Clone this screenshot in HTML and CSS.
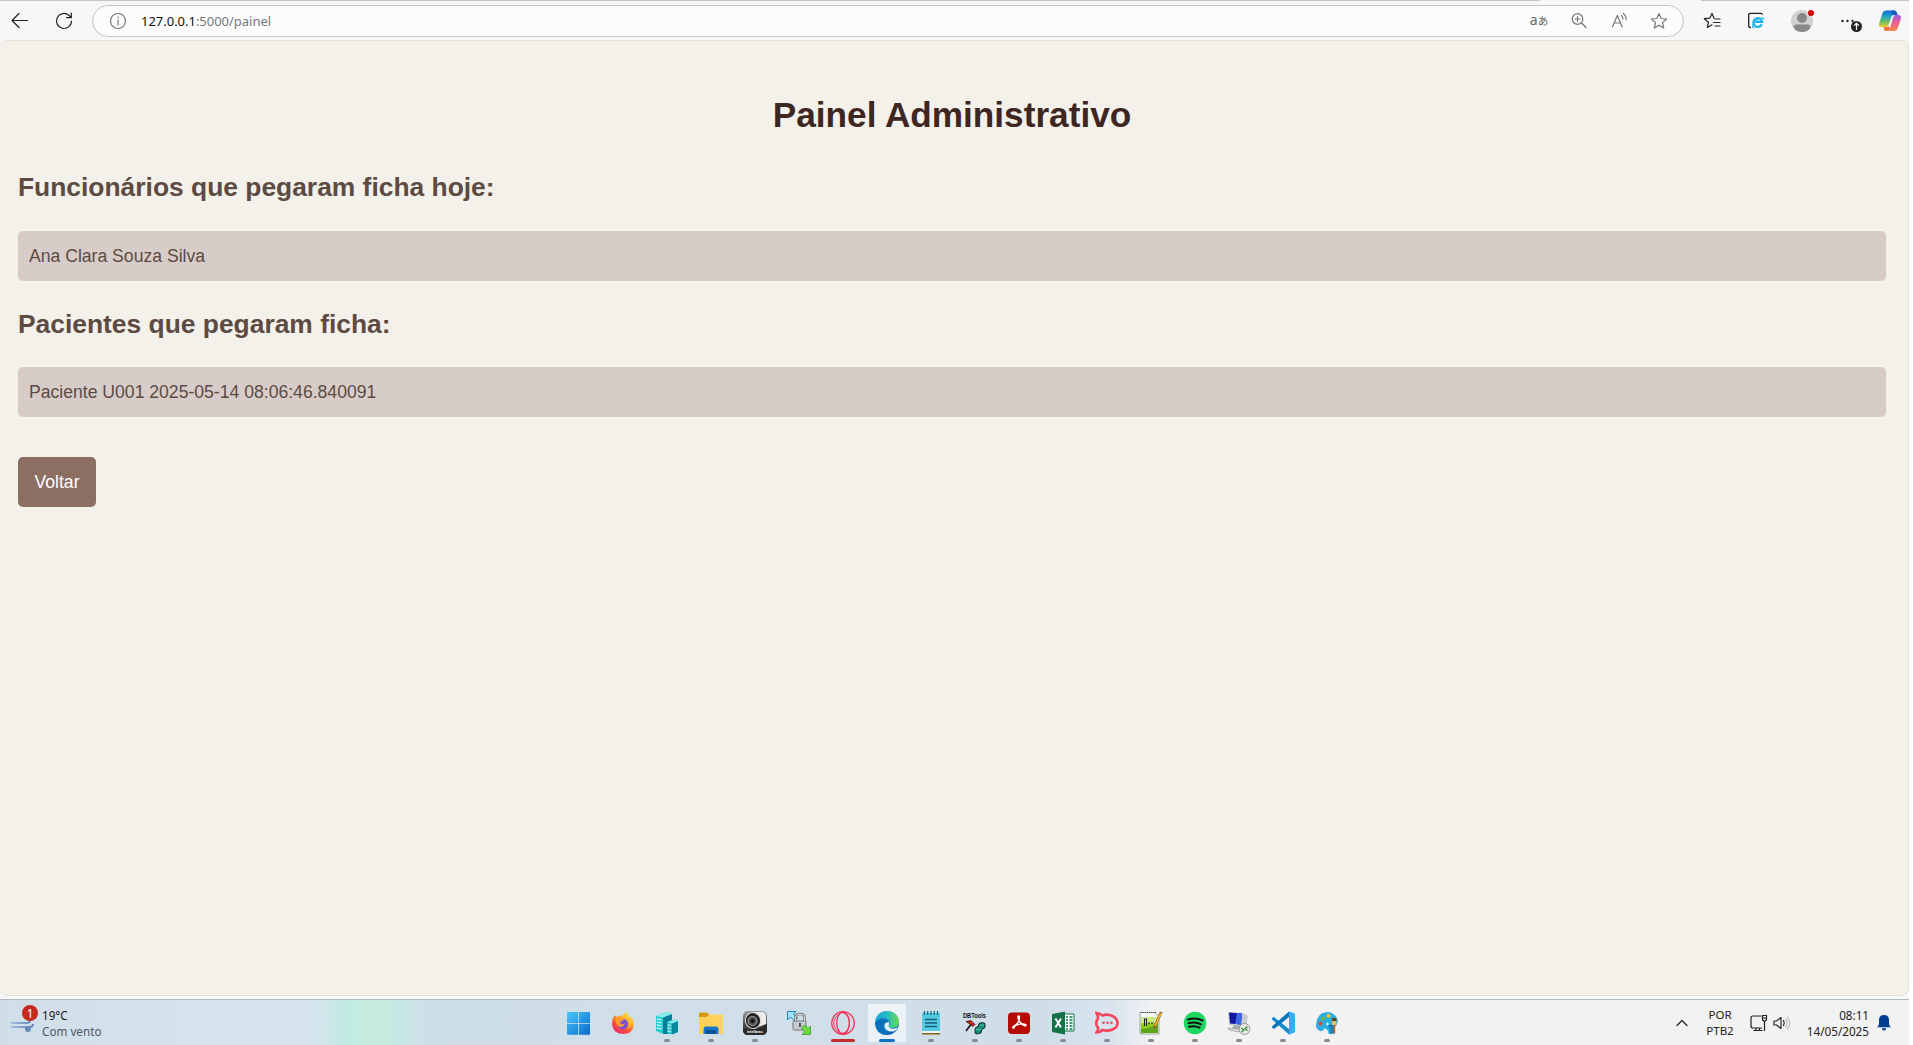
FILE: index.html
```
<!DOCTYPE html>
<html lang="pt-BR">
<head>
<meta charset="utf-8">
<title>Painel Administrativo</title>
<link rel="stylesheet" href="styles.css">
</head>
<body>
<div class="screen">
  <header class="toolbar">
    <div class="tabline"><span></span><span></span></div>
    <div class="nav">
      <svg width="18" height="18" viewBox="0 0 18 18" class="line dark"><path d="M16.500 8.500H1.500M8 1.500l-7 7 7 7"/></svg>
      <svg width="18" height="18" viewBox="0 0 18 18" class="line dark"><path d="M16.500 9a7.500 7.500 0 1 1-2.700-5.800l2.200 2.300M16.300 1v4.700h-4.600"/></svg>
    </div>
    <div class="address">
      <svg width="18" height="18" viewBox="0 0 18 18" class="line grey"><circle cx="9" cy="9" r="7.500"/><path d="M9 8v5M9 5v.800"/></svg>
      <div class="url"><b>127.0.0.1</b>:5000/painel</div>
      <div class="actions">
        <span class="translate"><i>a</i>あ</span>
        <svg width="18" height="18" viewBox="0 0 18 18" class="line grey"><circle cx="7.500" cy="7" r="5.300"/><path d="M11.500 11l4.500 4.500M5 7h5M7.500 4.500v5"/></svg>
        <svg width="18" height="18" viewBox="0 0 18 18" class="line grey"><path d="M2.500 15L7.300 3.500 12.200 15M4.200 11h6.200M11.500 3.500c1.100 1 1.500 2.200 1.300 3.700M13.200 1.500c2.200 1.500 3.200 3.700 2.800 6.300"/></svg>
        <svg width="18" height="18" viewBox="0 0 18 18" class="line grey"><path d="M9 1.500l2.200 5 5.400.5-4.100 3.600 1.200 5.400L9 13.200 4.300 16l1.200-5.400L1.400 7l5.400-.5z"/></svg>
      </div>
    </div>
    <div class="tools">
      <svg width="18" height="18" viewBox="0 0 18 18" class="line dark"><path d="M9 12.800L4.300 15.500l1.200-5.200-4.200-3.600 5.400-.5L9 1.500l2.100 4.700M12 7h5M10.500 10.500H17M12 14h5"/></svg>
      <svg width="18" height="18" viewBox="0 0 18 18"><path d="M4 15.500H3.500Q1.700 15.500 1.700 13.700V3Q1.700 1.300 3.500 1.300h10.300q1.500 0 1.500 1.500" fill="none" stroke="#222" stroke-width="1.300"/><path d="M14.800 12.300a4.400 4.400 0 1 1 .3-2.500H7.500" fill="none" stroke="#20b2ea" stroke-width="2.300"/><path d="M7 15.600c-3 1-1.500-4.500 3.500-7.700 3.800-2.400 7-3 6-.3" fill="none" stroke="#35bdf0" stroke-width="1.200"/></svg>
      <svg width="24" height="24" viewBox="0 0 24 24"><clipPath id="face"><circle cx="12" cy="12" r="11"/></clipPath><g clip-path="url(#face)"><path fill="#d2d0ce" d="M0 0h24v24H0z"/><circle cx="12" cy="9" r="5" fill="#8a8886"/><path fill="#8a8886" d="M3.500 18q0-2.500 3-2.500h11q3 0 3 2.500c-1 3-4 6-8.500 6s-7.500-3-8.500-6z"/></g><circle cx="21" cy="4" r="3.600" fill="#f7f7f7"/><circle cx="21" cy="4" r="3.100" fill="#d4040c"/></svg>
      <svg width="24" height="24" viewBox="0 0 24 24"><g fill="#222"><circle cx="4.500" cy="12" r="1.200"/><circle cx="9.500" cy="12" r="1.200"/><circle cx="14.500" cy="12" r="1.200"/><circle cx="18.500" cy="17.500" r="5.500"/></g><path d="M18.500 21v-6.500M16 16.700l2.500-2.500 2.500 2.500" fill="none" stroke="#fff" stroke-width="1.200"/></svg>
      <svg width="24" height="24" viewBox="0 0 24 24"><defs><linearGradient id="cpa" x2="0" y2="1"><stop stop-color="#1465d8"/><stop offset=".35" stop-color="#20a5c8"/><stop offset=".65" stop-color="#62bd65"/><stop offset="1" stop-color="#f7ce2c"/></linearGradient><linearGradient id="cpb" x2="0" y2="1"><stop stop-color="#a65ae0"/><stop offset=".5" stop-color="#e9608e"/><stop offset="1" stop-color="#fa8a47"/></linearGradient></defs><path fill="url(#cpa)" d="M8 1.500h8q2 0 2.700 2L19.500 6H16q-2 0-2.700 2l-2.600 8q-.7 2.200-3 2.200H4q-4 0-2.700-4.300L4.500 4Q5.300 1.500 8 1.500z"/><path fill="#185acb" d="M13 1.500h3q2 0 2.700 2L19.500 6h-5z"/><path fill="url(#cpb)" d="M17.500 6H20q4 0 2.700 4.300l-3.100 9.200q-.8 2.500-3.500 2.500H8q3 0 4-3l3-10q.7-3 2.500-3z"/><path fill="#f26b32" d="M5.500 18.200h3.200q1.300 0 2-1l1.300 1.600q-1 3.200-4 3.200-1.300 0-1.800-1.500z"/></svg>
    </div>
  </header>

  <main class="page">
    <h1>Painel Administrativo</h1>
    <h2>Funcionários que pegaram ficha hoje:</h2>
    <ul><li>Ana Clara Souza Silva</li></ul>
    <h2>Pacientes que pegaram ficha:</h2>
    <ul><li>Paciente U001 2025-05-14 08:06:46.840091</li></ul>
    <a class="back">Voltar</a>
  </main>

  <footer class="taskbar">
    <div class="weather">
      <div class="wind">
        <svg width="26" height="18" viewBox="0 0 26 18"><defs><linearGradient id="wi"><stop stop-color="#a3bddc"/><stop offset="1" stop-color="#6386b5"/></linearGradient></defs><path d="M1 6h15q4 0 4-3M1 10h18q4 0 4-3" fill="none" stroke="url(#wi)" stroke-width="2"/><path d="M15 10.500h6q0 4.500-3 4.500t-3-3z" fill="#6588b5"/></svg>
        <span class="badge">1</span>
      </div>
      <div class="forecast"><div>19°C</div><div class="sub">Com vento</div></div>
    </div>
    <nav class="apps">
      <div class="app"><svg viewBox="0 0 24 24"><defs><linearGradient id="win" x2="1" y2="1"><stop stop-color="#4cc8fb"/><stop offset="1" stop-color="#0869cc"/></linearGradient></defs><path fill="url(#win)" d="M0 2q0-1 1-1h10v11H0zM11.800 1h10.200q1 0 1 1v10H11.800zM0 12.700h11v11H1q-1 0-1-1zM11.800 12.700H23v10q0 1-1 1H11.800z"/></svg></div>
      <div class="app"><svg viewBox="0 0 24 24"><defs><linearGradient id="fx" x1=".8" x2=".2" y2="1"><stop stop-color="#fff04a"/><stop offset=".35" stop-color="#ffb22e"/><stop offset=".65" stop-color="#ff5434"/><stop offset="1" stop-color="#e82377"/></linearGradient></defs><path fill="url(#fx)" d="M3.500 4l2 2Q7 4.500 9 4.500l.5.5Q12 5 13 3q.7-2 2.500-2.500Q15.500 3 18 5l1.500 2V5.500Q23 9 23 13.500 22 23 12 23 1.500 22.500 1 13 1 8 3.500 4z"/><circle cx="11.700" cy="13" r="5.300" fill="#7850d4"/><path fill="#ff9c2a" d="M4 8q3-2 5-1 2 1 4 1-1 2-3.500 2.500-1 1.500.5 2.500 2 1 4-1-1 4-4.500 4Q5 15.500 4 8z"/><path fill="#ffbd35" d="M14 6q4 2 4 7t-4 6q5-1 6-6-1-6-6-7z"/></svg></div>
      <div class="app run"><svg viewBox="0 0 24 24"><path fill="#27cbd0" d="M1 5l11-4 5 2v20H8L1 20z"/><path fill="#087e99" d="M8 6l9-3v6l-4 2v12H8z"/><path fill="#83edeb" d="M1 5l11-4 5 2-9 3.500z"/><path fill="#23bfc5" d="M12 11l8-2.500 3 1.500v11l-7 2.500-4-2z"/><path fill="#07899d" d="M17 12.500l6-2.500v11l-6 2.500z"/><path fill="#83edeb" d="M12 11l8-2.500 3 1.500-6 2.500z"/><path stroke="#e3ffff" stroke-width="1.300" stroke-dasharray="1.700 .7" d="M2 8l5 1M2 11l5 1M2 14l5 1M2 17l5 1M13 14l3 .7M13 17l3 .7M13 20l3 .7"/></svg></div>
      <div class="app run"><svg viewBox="0 0 24 24"><path fill="#d89814" d="M0 2.500Q0 1.500 1 1.500h7l3 3-3 3H0z"/><path fill="#ffd35b" d="M0 6h7.500l3-2.500h12.500q1 0 1 1V22q0 1-1 1H1q-1 0-1-1z"/><path fill="#1875c9" d="M4.500 23v-5q0-2.500 2.500-2.500h10q2.500 0 2.500 2.500v5z"/><path fill="#0b5396" d="M7 19h10v4H7z"/></svg></div>
      <div class="app run"><svg viewBox="0 0 24 24"><defs><linearGradient id="cam" y2="1" x2="0"><stop stop-color="#999"/><stop offset=".5" stop-color="#555"/><stop offset="1" stop-color="#222"/></linearGradient></defs><rect width="24" height="24" rx="5" fill="url(#cam)"/><path fill="#ededed" d="M9 1h10q4 0 4 5v7l-8 3-6-4z"/><ellipse cx="10" cy="9.500" rx="7.500" ry="8" transform="rotate(-25 10 9.500)" fill="#242424" stroke="#ddd"/><circle cx="9.500" cy="10" r="4.500" fill="#4e4e4e" stroke="#aaa"/><circle cx="9.500" cy="10" r="2" fill="#111"/><path fill="#292929" d="M0 17q10 5 24-4v6q0 5-5 5H5q-5 0-5-5z"/><text x="4" y="22" class="tiny" fill="#fff">intelbras</text></svg></div>
      <div class="app"><svg viewBox="0 0 24 24"><path fill="#a9e2fa" stroke="#1687bd" d="M.500.500H9L6.500 3l4 4-3 3-4-4L.500 9z"/><path d="M8.500 13V7.500Q8.500 3 13 3t4.500 4.500V13" fill="none" stroke="#777" stroke-width="2.700"/><path d="M8.500 13V7.500Q8.500 3.200 13 3.200t4.500 4.300V13" fill="none" stroke="#eee" stroke-width="1"/><rect x="6" y="10" width="13" height="9" rx="1.500" fill="#c7ccd0" stroke="#777"/><path fill="#555" d="M12 12h2v4h-2z"/><path fill="#72d83b" stroke="#279c16" stroke-width=".7" d="M14.500 17l3-3 3.500 3.500 2.500-2.500v8.500H15l2.500-2.500z"/></svg></div>
      <div class="app run wide red"><svg viewBox="0 0 24 24" fill="none" stroke="#f52f59"><circle cx="12" cy="12" r="11.300" stroke-width="1.300"/><ellipse cx="12" cy="12" rx="6.300" ry="10.800" stroke-width="1.300"/><path d="M11 1.500c10 2 10 19 0 21M8 3c-7 5-7 14 0 18" stroke-width="1"/></svg></div>
      <div class="app run wide active"><svg viewBox="0 0 24 24"><defs><linearGradient id="ed"><stop stop-color="#17a6d9"/><stop offset=".5" stop-color="#24bfc0"/><stop offset="1" stop-color="#67d94e"/></linearGradient><linearGradient id="eb" x2="1" y2="1"><stop stop-color="#35aee8"/><stop offset="1" stop-color="#0753a6"/></linearGradient></defs><circle cx="12" cy="12" r="12" fill="url(#eb)"/><path fill="url(#ed)" d="M0 11Q2 0 13 0q10 1 11 10.500Q24 17 17.500 17q-4 0-4-1.500 0-.5 1-1.500 1.500-5-3.500-7Q5 5 0 11z"/><path fill="#e7f1f8" d="M13.500 10.500Q9 11.500 9.500 15.500q1.500 5.500 8 5 3-.5 5-3 .7-1-.3-1-5.700 3-8.700-1 1.500-2 0-5z"/><path fill="#0a70bd" d="M0 12Q3 7 9 8q4 1 4.500 3-6 .5-5 6 1 4 6 6.500Q5 25 1.500 18z"/></svg></div>
      <div class="app run"><svg viewBox="0 0 24 24"><path fill="#54c9e2" d="M3 2h18v19H3z"/><path d="M5.500 0v4M8.700 0v4M12 0v4M15.300 0v4M18.500 0v4" stroke="#176b89" stroke-width="1.300"/><path d="M6 8.500h12M6 12h12M6 15.500h12" stroke="#145f7b" stroke-width="1.500"/><path fill="#edf6f7" d="M3 20h18v2H3z"/><path fill="#8a5b1f" d="M3 22h18v1.500H3z"/></svg></div>
      <div class="app run"><svg viewBox="0 0 24 24" class="spill"><text x="0" y="6.500" textLength="23" lengthAdjust="spacingAndGlyphs" class="small" fill="#111">DBTools</text><path d="M3 20l6-8" stroke="#111" stroke-width="1.500"/><path fill="#d72222" stroke="#111" stroke-width=".7" d="M3 10.500l5-1 4 4-2 2-3-2.500z"/><path fill="#168b78" stroke="#111" stroke-width=".8" d="M12 18.500q0-2.500 3-3l1-3q4-2 6 0v4l-3 2-1 3.500q-5 2-6 0z"/><path d="M13 18q2.500 1.500 5 0M17 14q3 1 4 0" fill="none" stroke="#6de0ca" stroke-width=".8"/></svg></div>
      <div class="app run"><svg viewBox="0 0 24 24"><rect x="1" y="1.500" width="22" height="21.500" rx="4" fill="#b40b05"/><path d="M6 17q-1-1 2-2.500c3-2 5.500-7 4-9.500-1.500-.7-1.500 3 1 6 3 3.800 6 4.500 6 3s-6-1.500-9.500 0C7 15.500 7 18 6 17z" fill="none" stroke="#fff" stroke-width="1.400"/></svg></div>
      <div class="app run"><svg viewBox="0 0 24 24"><path fill="#fff" stroke="#197548" d="M12 3h11v17H12z"/><path d="M15 6h2M18.500 6h3M15 9h2M18.500 9h3M15 12h2M18.500 12h3M15 15h2M18.500 15h3M15 18h2M18.500 18h3" stroke="#197548" stroke-width="1.400"/><path fill="#147245" d="M1 3L14 .500v23L1 21z"/><path d="M4.500 7.500l5.500 9M10 7.500l-5.500 9" stroke="#fff" stroke-width="2"/></svg></div>
      <div class="app run"><svg viewBox="0 0 24 24"><path d="M1.500 2q4 .3 5.800 2.500Q12 2.500 17.500 5q5 2.500 5 7t-5 6.500q-5 2-10 .5-2.500 2.500-6 2.500 2-2 1.500-4.500Q-.500 12 3 7.500 3 4.500 1.500 2z" fill="none" stroke="#f5455c" stroke-width="2.600"/><g fill="#f5455c"><circle cx="8.500" cy="11.800" r="1.300"/><circle cx="12.500" cy="11.800" r="1.300"/><circle cx="16.500" cy="11.800" r="1.300"/></g></svg></div>
      <div class="app run"><svg viewBox="0 0 24 24"><path fill="#f6f8f4" stroke="#859085" stroke-width=".8" d="M1 1.500h15l4 4V23H1z"/><path fill="#c9e88a" d="M2 6h17v9H2z"/><path fill="#8fcb20" d="M2 12h17v10H2z"/><path fill="#5da51a" d="M2 18q9 0 17-6v10H2z"/><path d="M2 1.500h15" stroke="#444" stroke-dasharray="1 1"/><path d="M5.500 8v7M7.500 8v7M5 8h3" stroke="#222"/><path d="M9 12h6" stroke="#222" stroke-dasharray="2 1"/><path d="M22.300 1L15 17" stroke="#8e6020" stroke-width="2.700"/><path d="M22 2l-6 13" stroke="#f5b52d" stroke-width="1.700"/></svg></div>
      <div class="app run"><svg viewBox="0 0 24 24"><circle cx="12" cy="12" r="11.300" fill="#1ed760"/><path d="M5 8.500q8-2.500 14.500 1M5.500 12.300q7-2 12.500 1M6 15.800q6-1.500 10.500.8" fill="none" stroke="#101010" stroke-width="2" stroke-linecap="round"/></svg></div>
      <div class="app run"><svg viewBox="0 0 24 24"><path fill="#c9ced2" d="M1 1l15 1 5 3-2 12-17-3z"/><path fill="#1017a6" d="M2 1.500l13 1-1 11-11-1z"/><path fill="#3e68e3" d="M10 2l5 .5-1 11L8 13z"/><path fill="#a8acb0" d="M7 14l7 .7 2 4H4z"/><path fill="#d9dcdd" stroke="#888" stroke-width=".6" d="M1 17l13 1-2 3-10-2z"/><circle cx="17.500" cy="18" r="5.500" fill="#e5e7e5" stroke="#888" stroke-width=".8"/><path d="M14.500 17l2.500 2-2.500 2M20.500 15.500L18 17.500l2.500 2" fill="none" stroke="#258027" stroke-width="1.100"/></svg></div>
      <div class="app run"><svg viewBox="0 0 24 24"><path fill="#168bd1" d="M1 7l2-1 15 12v5.500L1 8.500z"/><path fill="#0875bb" d="M1 16.500l2 1.500L18 6V.500L1 15.500z"/><path fill="#36aef4" d="M18 .300l6 2.500v18.400l-6 2.500z"/></svg></div>
      <div class="app run"><svg viewBox="0 0 24 24"><path fill="#2daee0" d="M1 14Q2 1 13 1q8 1 10 9-1 5-3.500 6v6q-3 2-6 .5-1-5-4-5-2 4-5.500 2Q1 18 1 14z"/><path fill="#1681bd" d="M12 15q4 1 3 7.500l4.500-.5V12z"/><circle cx="5.500" cy="12.500" r="2" fill="#c95143"/><circle cx="8" cy="7.500" r="2" fill="#76b743"/><circle cx="13.500" cy="5" r="2" fill="#f3c433"/><path d="M11 13h3M12.500 11.500v3" stroke="#fff"/><path fill="#e8b967" d="M17 8h4.500v6H17z"/><path fill="#683b1c" d="M17 8l1-1h2.500l1 1v2H17z"/><path fill="#9a633b" d="M18.200 14h2v8q-1 2-2 0z"/></svg></div>
    </nav>
    <div class="tray">
      <svg width="12" height="8" viewBox="0 0 12 8" class="line dark"><path d="M1 6.500l5-5 5 5"/></svg>
      <div class="lang"><div>POR</div><div>PTB2</div></div>
      <svg width="18" height="18" viewBox="0 0 18 18" class="line dark net"><path d="M11 2H3Q1 2 1 4v8q0 2 2 2h8.500M4 16.500h8M6 14v2.500M9.500 14v2.500M14.500 7v9.500M12.500 1.500h4V5q0 2-2 2t-2-2zM12.500 4h4"/></svg>
      <svg width="18" height="16" viewBox="0 0 18 16" class="line dark"><path d="M1 6v4h2.500l4.500 3.500v-11L3.500 6z"/><path d="M10.500 5.500q1.500 2.500 0 5"/><path stroke="#bbb" d="M12.500 4q3 4 0 8M14.500 2q4.500 6 0 12"/></svg>
      <div class="clock"><div>08:11</div><div>14/05/2025</div></div>
      <svg width="14" height="16" viewBox="0 0 14 16"><path fill="#003e92" d="M7 0q5 0 5 5v4.500l1.800 2.700H.200L2 9.500V5q0-5 5-5zM4.700 13.200h4.600Q9 15.500 7 15.500t-2.300-2.300z"/></svg>
    </div>
  </footer>
</div>
</body>
</html>
```
FILE: styles.css
```
* { box-sizing: border-box; }
body { margin: 0; background: #fff; overflow: hidden; }
svg { display: block; flex: none; }

.screen {
  width: 1909px;
  height: 1045px;
  display: grid;
  grid-template-rows: 40px 956px 1fr;
  background: #f7f7f7;
  font-family: "Noto Sans", "Noto Sans CJK JP", sans-serif;
}
.line { fill: none; stroke-width: 1.200; stroke-linejoin: round; stroke-linecap: round; }
.dark { stroke: #222; }
.grey { stroke: #777; }

/* browser toolbar */
.toolbar { position: relative; display: flex; align-items: center; padding-top: 1px; }
.tabline { position: absolute; inset: 0 0 auto; display: flex; justify-content: space-between; }
.tabline span { width: 1540px; height: 1px; background: #c6c6c6; }
.tabline span + span { width: 208px; }
.nav { width: 92px; display: flex; gap: 26px; padding-left: 11px; }
.address {
  width: 1592px;
  height: 32px;
  display: flex;
  align-items: center;
  padding: 0 4px 0 16px;
  border: 1px solid #c4c4c4;
  border-radius: 16px;
  background: #fcfcfc;
}
.url { margin-left: 14px; font-size: 13px; line-height: 18px; color: #777; letter-spacing: -0.020px; }
.url b { font-weight: 400; color: #111; }
.actions { margin-left: auto; display: grid; grid-template-columns: repeat(4, 40px); place-items: center; }
.translate { font-size: 10.500px; line-height: 18px; color: #666; white-space: nowrap; }
.translate i { font-style: normal; font-size: 14px; }
.tools {
  display: grid;
  grid-template-columns: 44px 44px 48px 48px 32px;
  place-items: center;
  margin-left: 6px;
}

/* page content */
.page {
  padding: 19px 22px 18px 18px;
  border: solid #e3e1dc;
  border-width: 1px 1px 1px 0;
  border-radius: 8px;
  background: #f4f1ea;
  font-family: "Liberation Sans", Arial, sans-serif;
  font-size: 17.600px;
  color: #5d4b43;
}
.page h1 {
  margin: 34px 0 0;
  font-size: 35.200px;
  line-height: 42px;
  text-align: center;
  color: #3e2723;
}
.page h2 { margin: 35px 0 28px; font-size: 26.400px; line-height: 32px; }
.page ul { margin: 0; padding: 0; list-style: none; }
.page li { height: 50px; padding: 0 11px; line-height: 50px; border-radius: 5px; background: #d7ccc8; }
.page ul + h2 { margin: 27px 0; }
.back {
  display: block;
  width: 78px;
  height: 50px;
  margin-top: 40px;
  border-radius: 5px;
  background: #8d6e63;
  color: #fff;
  line-height: 50px;
  text-align: center;
}

/* taskbar */
.taskbar {
  display: flex;
  margin-top: 3px;
  border-top: 1px solid #b3b8bc;
  background: linear-gradient(90deg, #d0dee9 0, #d7e5ef 250px, #d5e5ed 320px, #c2e9e4 340px, #c5ecdf 365px, #c5ecdf 385px, #c2e7e5 400px, #cfdfe8 425px, #d0dee9 1050px, #d9e4ee 1110px, #eff1f3 1150px, #f2f2f2 1180px);
  color: #222;
  font-size: 11.500px;
  line-height: 16px;
}
.weather { width: 556px; display: flex; padding: 7px 0 0 10px; font-size: 11.700px; }
.wind { position: relative; width: 32px; padding-top: 10px; }
.badge {
  position: absolute;
  left: 12px;
  top: -2px;
  width: 16px;
  height: 16px;
  border-radius: 50%;
  background: #c42b1c;
  color: #fff;
  text-align: center;
}
.sub { color: #505a60; }
.apps { display: flex; margin-left: 1px; }
.app { width: 44px; height: 45px; padding: 11px 10px 0; position: relative; }
.app svg { width: 24px; height: 24px; }
.spill { overflow: visible; }
.run::after {
  content: "";
  position: absolute;
  left: 19px;
  top: 39px;
  width: 6px;
  height: 3px;
  border-radius: 2px;
  background: #858b90;
}
.wide::after { left: 10px; width: 24px; background: #c42b2b; }
.active { background: linear-gradient(#edf3f8, #e9f0f6) center 4px / 38px 38px no-repeat; }
.active::after { left: 14px; width: 16px; background: #1271c4; }
.tiny { font: 700 3.800px "Liberation Sans", sans-serif; }
.small { font: 700 6.500px "Liberation Sans", sans-serif; }
.tray { flex: 1; display: flex; align-items: center; padding: 0 18px 0 0; justify-content: flex-end; }
.lang { width: 30px; margin: 0 15px 0 17px; text-align: center; }
.net { margin-right: 5px; }
.clock { width: 78px; text-align: right; margin-right: 8px; white-space: nowrap; font-size: 11.700px; }
```
